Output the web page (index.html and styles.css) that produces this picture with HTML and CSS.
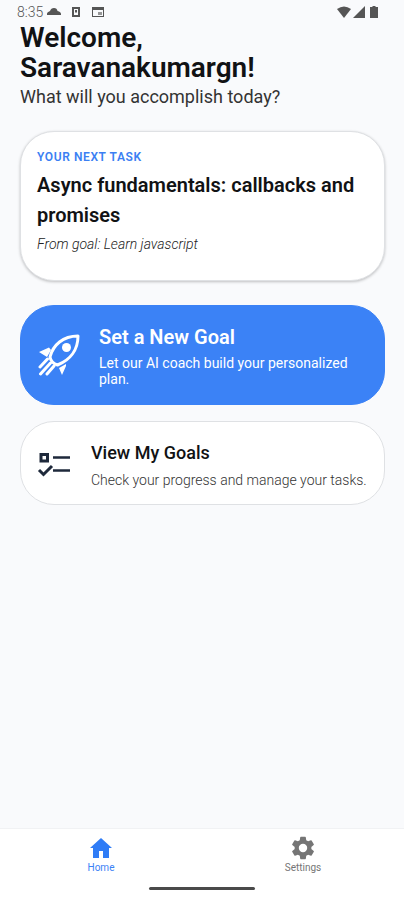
FILE: index.html
```
<!DOCTYPE html>
<html lang="en">
<head>
<meta charset="utf-8">
<meta name="viewport" content="width=device-width, initial-scale=1">
<title>Home</title>
<link rel="stylesheet" href="styles.css">
</head>
<body>
<header class="status">
  <span class="clock">8:35</span>
  <svg class="status-cloud" width="14" height="10" viewBox="0 0 14 10"><path d="M0 8V6.500Q0 5 3 4Q4 1 7 1Q10 1 10.500 4Q14 5 14 7V8Z"/></svg>
  <svg class="status-app" width="10" height="10" viewBox="0 0 10 10"><path fill-rule="evenodd" d="M1 0H9V10H1ZM3 2V8H7V2Z"/><path d="M4 3H6V5.500H4Z"/></svg>
  <svg class="status-card" width="12" height="10" viewBox="0 0 12 10"><path fill-rule="evenodd" d="M0 0H12V10H0ZM1 3V9H11V3Z"/><path d="M6 5H10V8H6Z" opacity=".6"/></svg>
  <span class="status-end">
    <svg width="14" height="12" viewBox="0 0 14 12"><path d="M0 3Q7-2 14 3L7 12Z"/></svg>
    <svg width="12" height="12" viewBox="0 0 12 12"><path d="M12 0V12H0Z"/></svg>
    <svg class="battery" width="8" height="12" viewBox="0 0 8 12"><path d="M2.500 0H5.500V1H8V12H0V1H2.500Z"/></svg>
  </span>
</header>
<main class="content">
  <h1 class="greeting">Welcome, Saravanakumargn!</h1>
  <p class="question">What will you accomplish today?</p>
  <section class="card task">
    <p class="eyebrow">YOUR NEXT TASK</p>
    <h2 class="task-title">Async fundamentals: callbacks and promises</h2>
    <p class="task-goal">From goal: Learn javascript</p>
  </section>
  <button class="card action primary" type="button">
    <svg class="rocket" width="42" height="42" viewBox="0 0 42 42" fill="none" stroke="#fff">
      <path d="M12 23C15 11 25 2 40 2C40 16 32 26 19.500 31Q13 29 12 23Z" stroke-width="3" stroke-linejoin="round"/>
      <circle cx="28.500" cy="13.500" r="4.500" fill="#fff" stroke="none"/>
      <path d="M1 18L11 13.500L13 16L9 23ZM21 34L28 30V32L24 41Z" fill="#fff" stroke="none"/>
      <path d="M9.500 25L2 33M12.500 29L2.500 40M16 32L9 40" stroke-width="3" stroke-linecap="round"/>
    </svg>
    <span class="action-text">
      <span class="action-title">Set a New Goal</span>
      <span class="action-note">Let our AI coach build your personalized plan.</span>
    </span>
  </button>
  <button class="card action secondary" type="button">
    <svg class="checklist" width="34" height="26" viewBox="0 0 34 26" fill="none" stroke="#1e293b" stroke-width="3">
      <path d="M4 2.500H10.500V9H4Z"/><path d="M16 5.500H33M16 18.500H33" stroke-width="2.500"/><path d="M2 18L6.500 22.500L15 14"/>
    </svg>
    <span class="action-text">
      <span class="action-title">View My Goals</span>
      <span class="action-note">Check your progress and manage your tasks.</span>
    </span>
  </button>
</main>
<footer class="dock">
  <nav class="tabs">
    <a class="tab current" href="#home" aria-current="page">
      <svg width="24" height="24" viewBox="0 0 24 24"><path d="M4 22V12H1L12 2L23 12H20V22H14V15H10V22Z"/></svg>
      Home
    </a>
    <a class="tab" href="#settings">
      <svg width="28" height="28" viewBox="0 0 24 24"><path d="M19.140 12.940c.04-.3.060-.61.060-.94s-.02-.64-.07-.94l2.030-1.580a.49.490 0 0 0 .12-.61l-1.920-3.320a.49.490 0 0 0-.59-.22l-2.390.96a7 7 0 0 0-1.620-.94L14.400 2.810a.48.480 0 0 0-.48-.41h-3.840a.48.480 0 0 0-.47.410l-.36 2.540a7 7 0 0 0-1.620.94l-2.390-.96a.48.480 0 0 0-.59.220L2.740 8.870a.48.480 0 0 0 .12.610l2.030 1.580a6 6 0 0 0 0 1.880l-2.030 1.580a.49.490 0 0 0-.12.610l1.920 3.320c.12.220.37.290.59.220l2.390-.96c.5.380 1.030.7 1.620.94l.36 2.540c.05.240.24.410.48.410h3.840c.24 0 .44-.17.470-.41l.36-2.540a7 7 0 0 0 1.620-.94l2.390.96c.22.080.47 0 .59-.22l1.920-3.320a.48.480 0 0 0-.12-.61ZM12 15.600a3.600 3.600 0 1 1 0-7.200 3.600 3.600 0 0 1 0 7.200Z"/></svg>
      Settings
    </a>
  </nav>
  <div class="handle"></div>
</footer>
</body>
</html>
```

FILE: styles.css
```
* {
  box-sizing: border-box;
}

body {
  margin: 0;
  min-height: 100vh;
  display: flex;
  flex-direction: column;
  background: #f9fafc;
  color: #111214;
  font-family: Roboto, "Liberation Sans", sans-serif;
}

h1, h2, p {
  margin: 0;
}

svg {
  display: block;
  flex: none;
}

.status {
  display: flex;
  align-items: center;
  height: 23px;
  padding: 0 26px 0 17px;
  color: #555;
  fill: #555;
}

.clock {
  font-size: 14px;
  line-height: 20px;
  font-weight: 300;
  margin-right: 4px;
}

.status-app {
  margin: 0 11px 0 10px;
}

.status-end {
  display: flex;
  gap: 2px;
  margin-left: auto;
}

.battery {
  margin-left: 3px;
}

.content {
  flex: 1;
  display: flex;
  flex-direction: column;
  padding: 0 19px 24px 20px;
}

.greeting {
  max-width: 280px;
  font-size: 28px;
  line-height: 30px;
  font-weight: 600;
}

.question {
  font-size: 18px;
  line-height: 28px;
  color: #333;
}

.card {
  border: 1px solid #dfe1e4;
  border-radius: 34px;
  background: #fff;
}

.task {
  margin-top: 20px;
  padding: 17px 16px 26px;
  box-shadow: 0 1px 3px rgba(0, 0, 0, 0.24);
}

.eyebrow {
  font-size: 12px;
  line-height: 16px;
  font-weight: 600;
  letter-spacing: 0.05em;
  color: #3b7ff3;
}

.task-title {
  margin-top: 5px;
  font-size: 20px;
  line-height: 30px;
  font-weight: 600;
}

.task-goal {
  margin-top: 4px;
  font-size: 14px;
  line-height: 20px;
  font-style: italic;
  font-weight: 300;
  color: #222;
}

.action {
  display: flex;
  align-items: center;
  width: 100%;
  color: inherit;
  font: inherit;
  text-align: left;
  cursor: pointer;
}

.action-text {
  display: flex;
  flex-direction: column;
  gap: 4px;
}

.primary {
  gap: 19px;
  margin-top: 24px;
  padding: 17px;
  border-color: #3b82f6;
  background: #3b82f6;
  color: #fff;
}

.primary .action-title {
  font-size: 20px;
  line-height: 28px;
  font-weight: 600;
}

.primary .action-note {
  font-size: 14px;
  line-height: 16px;
}

.secondary {
  gap: 20px;
  margin-top: 16px;
  padding: 18px 12px 14px 16px;
}

.secondary .action-title {
  font-size: 18px;
  line-height: 26px;
  font-weight: 500;
}

.secondary .action-note {
  font-size: 14px;
  line-height: 20px;
  font-weight: 300;
  color: #333;
}

.dock {
  padding: 5px 0 10px;
  border-top: 1px solid #f1f2f4;
  background: #fff;
}

.tabs {
  display: grid;
  grid-template-columns: 1fr 1fr;
}

.tab {
  display: flex;
  flex-direction: column;
  align-items: center;
  justify-content: flex-end;
  font-size: 10px;
  line-height: 12px;
  color: #757575;
  fill: #757575;
  text-decoration: none;
}

.current {
  color: #3b82f6;
  fill: #2f7cf6;
}

.current svg {
  margin-bottom: 2px;
}

.handle {
  width: 106px;
  height: 3px;
  margin: 13px auto 0;
  border-radius: 2px;
  background: #4a4a4a;
}
```
